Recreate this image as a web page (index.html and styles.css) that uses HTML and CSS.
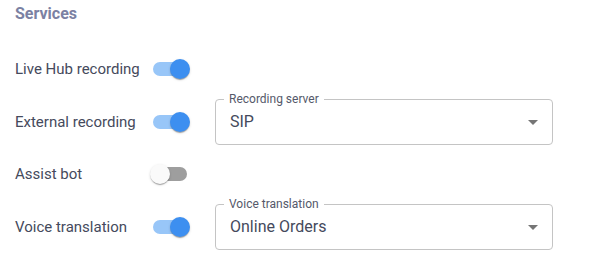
FILE: index.html
```html
<!DOCTYPE html>
<html lang="en">
<head>
    <meta charset="UTF-8">
    <meta name="viewport" content="width=device-width, initial-scale=1.0">
    <title>Services</title>
    <link rel="stylesheet" href="styles.css">
</head>
<body>
    <div class="panel">
        <h2 class="title">Services</h2>

        <div class="row">
            <span class="row-label">Live Hub recording</span>
            <span class="switch on"><span class="track"></span><span class="thumb"></span></span>
        </div>

        <div class="row">
            <span class="row-label">External recording</span>
            <span class="switch on"><span class="track"></span><span class="thumb"></span></span>
            <div class="select">
                <span class="select-label">Recording server</span>
                <span class="select-value">SIP</span>
                <svg class="arrow" viewBox="0 0 24 24" width="24" height="24"><path d="M7 10l5 5 5-5z"></path></svg>
            </div>
        </div>

        <div class="row">
            <span class="row-label">Assist bot</span>
            <span class="switch"><span class="track"></span><span class="thumb"></span></span>
        </div>

        <div class="row">
            <span class="row-label">Voice translation</span>
            <span class="switch on"><span class="track"></span><span class="thumb"></span></span>
            <div class="select">
                <span class="select-label">Voice translation</span>
                <span class="select-value">Online Orders</span>
                <svg class="arrow" viewBox="0 0 24 24" width="24" height="24"><path d="M7 10l5 5 5-5z"></path></svg>
            </div>
        </div>
    </div>
</body>
</html>
```

FILE: styles.css
```css
body {
    margin: 0;
    padding: 0;
    font-family: Roboto, "Liberation Sans", Arial, sans-serif;
    background-color: #fff;
    color: #454a5c;
}
.panel {
    padding: 4px 15px 0;
}
.title {
    margin: 0 0 22px;
    font-size: 16px;
    font-weight: 700;
    line-height: 20px;
    color: #7b81a3;
}
.row {
    display: flex;
    align-items: center;
    height: 46px;
    margin-bottom: 6.5px;
}
.row-label {
    width: 138px;
    font-size: 15px;
}
.switch {
    position: relative;
    width: 34px;
    height: 14px;
    flex-shrink: 0;
}
.track {
    display: block;
    width: 100%;
    height: 100%;
    border-radius: 7px;
    background-color: #9e9e9e;
}
.thumb {
    position: absolute;
    top: -3px;
    left: -3px;
    width: 20px;
    height: 20px;
    border-radius: 50%;
    background-color: #fafafa;
    box-shadow: 0 2px 1px -1px rgba(0, 0, 0, 0.2), 0 1px 1px 0 rgba(0, 0, 0, 0.14), 0 1px 3px 0 rgba(0, 0, 0, 0.12);
}
.switch.on .track {
    background-color: #98c6f8;
}
.switch.on .thumb {
    left: 17px;
    background-color: #3d8ff0;
}
.select {
    position: relative;
    display: flex;
    align-items: center;
    width: 338px;
    height: 46px;
    margin-left: 28px;
    padding-left: 14px;
    box-sizing: border-box;
    border: 1px solid #c4c4c4;
    border-radius: 4px;
}
.select-label {
    position: absolute;
    top: -8px;
    left: 8px;
    padding: 0 5px;
    background-color: #fff;
    font-size: 12px;
    line-height: 14px;
    color: #55596a;
}
.select-value {
    font-size: 16px;
    color: #454a5c;
}
.arrow {
    position: absolute;
    right: 7px;
    top: calc(50% - 12px);
    fill: #757575;
}
```
